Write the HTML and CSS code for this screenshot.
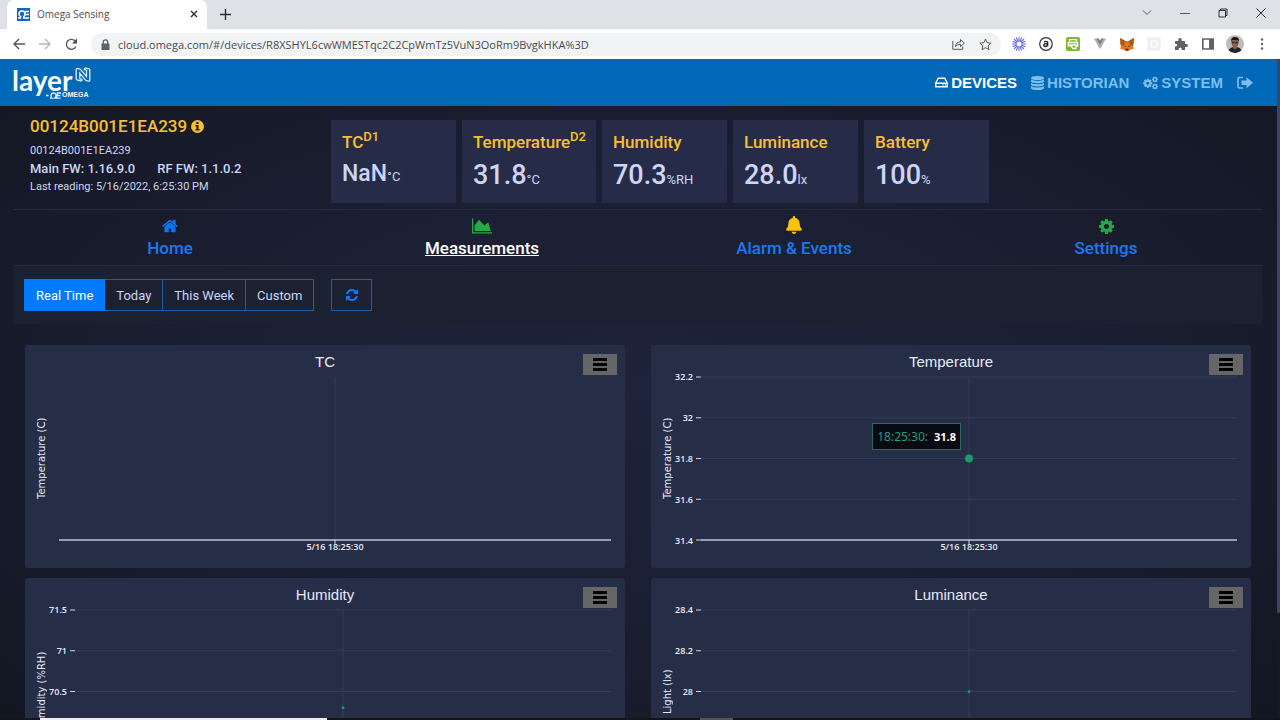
FILE: index.html
```html
<!DOCTYPE html>
<html lang="en">
<head>
<meta charset="utf-8">
<title>Omega Sensing</title>
<link rel="stylesheet" href="styles.css">
</head>
<body>
<svg class="sprite" aria-hidden="true">
  <symbol id="cog" viewBox="128 128 1536 1536"><path fill-rule="evenodd" d="M1152 896q0-106-75-181t-181-75-181 75-75 181 75 181 181 75 181-75 75-181zm512-109v222q0 12-8 23t-20 13l-185 28q-19 54-39 91 35 50 107 138 10 12 10 25t-9 23q-27 37-99 108t-94 71q-12 0-26-9l-138-108q-44 23-91 38-16 136-29 186-7 28-36 28h-222q-14 0-24.500-8.500t-11.500-21.500l-28-184q-49-16-90-37l-141 107q-10 9-25 9-14 0-25-11-126-114-165-168-7-10-7-23 0-12 8-23 15-21 51-66.500t54-70.500q-27-50-41-99l-183-27q-13-2-21-12.500t-8-23.500v-222q0-12 8-23t19-13l186-28q14-46 39-92-40-57-107-138-10-12-10-24 0-10 9-23 26-36 98.500-107.500t94.500-71.500q13 0 26 10l138 107q44-23 91-38 16-136 29-186 7-28 36-28h222q14 0 24.500 8.500t11.500 21.500l28 184q49 16 90 37l142-107q9-9 24-9 13 0 25 10 129 119 165 170 7 8 7 22 0 12-8 23-15 21-51 66.500t-54 70.500q26 50 41 98l183 28q13 2 21 12.500t8 23.500z"/></symbol>
  <symbol id="bars" viewBox="0 0 14 13"><path d="M0 0h14v3H0zM0 5h14v3H0zM0 10h14v3H0z"/></symbol>
</svg>

<div class="tabstrip">
  <div class="tab">
    <svg class="favicon" viewBox="0 0 13 13"><path fill="#1565c0" d="M0 0h13v13H0z"/><path fill="none" stroke="#fff" stroke-width="1.500" d="M1 10h2.500V8.500Q2 7.500 2 6q0-3 3-3t3 3q0 1.500-1.200 2.500V10H12M8 3.500h4M8.500 6.500H12"/></svg>
    <span class="tab-title">Omega Sensing</span>
    <button class="chrome-btn tab-close" aria-label="Close tab"><svg width="8" height="8" viewBox="0 0 8 8"><path class="line dark" d="M1 1l6 6M7 1L1 7"/></svg></button>
  </div>
  <button class="chrome-btn new-tab" aria-label="New tab"><svg width="11" height="11" viewBox="0 0 11 11"><path class="line dark" d="M5.500 0v11M0 5.500h11"/></svg></button>
  <div class="window-controls">
    <button class="chrome-btn" aria-label="Search tabs"><svg width="10" height="6" viewBox="0 0 10 6"><path class="line thin" d="M1 .5l4 4 4-4"/></svg></button>
    <button class="chrome-btn" aria-label="Minimize"><svg width="10" height="10" viewBox="0 0 10 10"><path class="line thin" d="M0 5.500h10"/></svg></button>
    <button class="chrome-btn" aria-label="Restore"><svg width="10" height="10" viewBox="0 0 10 10"><path class="line thin dark" d="M1 2.500h6.500V9H1zM2.500 2.500V1H9v6.500H7.500"/></svg></button>
    <button class="chrome-btn" aria-label="Close"><svg width="10" height="10" viewBox="0 0 10 10"><path class="line thin dark" d="M.5.5l9 9M9.500.5l-9 9"/></svg></button>
  </div>
</div>

<div class="toolbar">
  <div class="history">
    <button class="chrome-btn" aria-label="Back"><svg width="12" height="12" viewBox="0 0 12 12"><path class="line" d="M12 6H1.500M6 1L1 6l5 5"/></svg></button>
    <button class="chrome-btn" aria-label="Forward"><svg width="12" height="12" viewBox="0 0 12 12"><path class="line faint" d="M0 6h10.500M6 1l5 5-5 5"/></svg></button>
    <button class="chrome-btn" aria-label="Reload"><svg width="13" height="13" viewBox="0 0 13 13"><path class="line" d="M10.900 8.500A5 5 0 1 1 10.500 3.500L11.500 5"/><path d="M12 .5V5.500H7z" fill="#4a4d51"/></svg></button>
  </div>
  <div class="omnibox">
    <svg class="lock" viewBox="0 0 9 11"><path d="M.5 4.500h8V11h-8z" fill="#5f6368"/><path d="M2.300 5V3a2.200 2.200 0 0 1 4.400 0v2" fill="none" stroke="#5f6368" stroke-width="1.300"/></svg>
    <input class="url" type="text" aria-label="Address" value="cloud.omega.com/#/devices/R8XSHYL6cwWMESTqc2C2CpWmTz5VuN3OoRm9BvgkHKA%3D">
    <button class="chrome-btn" aria-label="Share"><svg width="13" height="12" viewBox="0 0 13 12"><path class="line thin" d="M.8 3v8.300h10V8.500M3.500 8.500q.3-4.500 5-4.500V1.500l3.800 3.600-3.800 3.600V6.300q-3.500 0-5 2.200z"/></svg></button>
    <button class="chrome-btn" aria-label="Bookmark"><svg width="13" height="13" viewBox="0 0 13 13"><path class="line thin" d="M6.500 1l1.600 3.700 4 .4-3 2.700.9 3.900-3.500-2-3.500 2 .9-3.900-3-2.700 4-.4z"/></svg></button>
  </div>
  <div class="extensions">
    <svg viewBox="0 0 16 16"><g stroke="#6a67e4" stroke-width="1.100"><path d="M8 1v14M1 8h14M3 3l10 10M13 3L3 13M5.300 1.500l5.400 13M10.700 1.500l-5.400 13M1.500 5.300l13 5.400M14.500 5.300l-13 5.400"/></g><circle cx="8" cy="8" r="2.500" fill="#fff"/></svg>
    <svg viewBox="0 0 16 16"><circle cx="8" cy="8" r="6.300" fill="#fff" stroke="#333" stroke-width="1.200"/><path d="M6 6q2-1.300 3.600 0v4.500M9.500 7.700q-3.700-.2-3.700 1.500 0 1.500 1.700 1.300 1.500-.2 2-1.500" fill="none" stroke="#222" stroke-width="1.400"/></svg>
    <svg viewBox="0 0 16 16"><rect x="1" y="1" width="14" height="14" rx="2" fill="#7cb928"/><path d="M4.500 5.500V3.700h7v1.800M4.500 10H3.300V6.500h9.400V10h-1.200M5 9h6v3.500H8L5 9z" fill="none" stroke="#fff" stroke-width="1.300"/></svg>
    <svg viewBox="0 0 16 16"><path d="M2 2.500h3.500L8 7.200l2.500-4.700H14L8 13.300z" fill="#aaa"/><path d="M4.800 2.500h2L8 4.800l1.200-2.300h2L8 8.500z" fill="#777"/></svg>
    <svg viewBox="0 0 16 16"><path d="M1.200 2l5 3h3.600l5-3 .2 5-1 3 .7 3-3.200.5L9.700 15H6.300l-1.800-1.500-3.200-.5.700-3-1-3z" fill="#e2761b"/><path d="M1.200 2l5 3-1 4L2 10zM14.800 2l-5 3 1 4 3.200 1z" fill="#a9571d"/><path d="M5 9.500l2 .8-.4 1zM11 9.500l-2 .8.400 1zM6.500 12.800h3l-.5 1.700H7z" fill="#233447"/></svg>
    <svg viewBox="0 0 16 16"><rect x="1.500" y="1.500" width="13" height="13" rx="1" fill="#eee"/><circle cx="8" cy="8" r="3.500" fill="none" stroke="#fafafa" stroke-width="2"/></svg>
    <svg viewBox="0 0 16 16"><path d="M2 5h3.500Q4.800 2 7 2t1.500 3H12v3q3-.6 3 1.400T12 11v3H8.800q.2-2.500-1.600-2.500T5.500 14H2v-3.500q2.300 0 2.300-1.500T2 7.700z" fill="#5f6368"/></svg>
    <svg viewBox="0 0 16 16"><path d="M2.800 3h10.400v10H2.800z" fill="none" stroke="#5f6368" stroke-width="1.600"/><path d="M9 3h4.500v10H9z" fill="#5f6368"/></svg>
    <svg class="avatar" viewBox="0 0 18 18"><circle cx="9" cy="9" r="9" fill="#b9bcbb"/><path d="M2.500 15.200Q4 12.500 7 12h4q3 .5 4.500 3.200A9 9 0 0 1 2.500 15.200z" fill="#20242a"/><path d="M7 10h4v3l-2 1.500L7 13z" fill="#8b5d4b"/><ellipse cx="9" cy="7.500" rx="3.500" ry="4.500" fill="#8a5e4d"/><path d="M5 7q-.5-5 4-5t4 5l-1-2H6z" fill="#17181b"/><path d="M5.800 6.700h2.700v1.600H5.800zM9.500 6.700h2.700v1.600H9.500z" fill="#2c2523"/></svg>
    <svg viewBox="0 0 16 16"><g fill="#5f6368"><circle cx="8" cy="3.500" r="1.200"/><circle cx="8" cy="8" r="1.200"/><circle cx="8" cy="12.500" r="1.200"/></g></svg>
  </div>
</div>

<div class="viewport">
<div class="page">
  <header class="app-header">
    <a class="brand" href="#" aria-label="layer N by Omega">
      <span class="brand-name">layer</span>
      <svg class="brand-n" viewBox="0 0 16 16"><path d="M1.200 2.700q0-1.500 1.600-1.200l2.500.7 6.200 7.300V3.200L9.500 2.700q-.5-1.700 1-1.500l3 .4q1.300.2 1.300 1.500v9.800q0 1.700-1.600 1.200l-2.500-.8-5.900-7v5.500l2 .6q.6 1.700-1 1.500l-3.300-.8q-1.300-.3-1.300-1.500z"/></svg>
      <span class="brand-sub"><svg viewBox="0 0 15 7"><path d="M0 3.500h2.500M4 6.200h2Q4.800 5 5 3.500 5.300 1 7.500 1T10 3q0 2-1.500 3.200h2L11.500 1H15M11 3.500h3.500M10.500 6.200h4"/></svg>OMEGA</span>
    </a>
    <nav class="main-nav">
      <a class="active" href="#"><svg width="13" height="11" viewBox="0 0 13 11"><path d="M3.300 1.200h6.400L12.200 6v3.800H.8V6zM.8 6.200h11.400M7.500 8h1M9.800 8h1" fill="none" stroke="currentColor" stroke-width="1.400"/></svg>DEVICES</a>
      <a href="#"><svg width="13" height="14" viewBox="0 0 13 14"><path fill="currentColor" d="M0 2q0-2 6.500-2T13 2t-6.500 2T0 2zM0 3.600q2 1.300 6.500 1.300T13 3.600v1.700q0 1.900-6.500 1.900T0 5.300zM0 6.900q2 1.300 6.500 1.300T13 6.900v1.700q0 1.900-6.500 1.900T0 8.600zM0 10.200q2 1.300 6.500 1.300T13 10.200V12q0 2-6.500 2T0 12z"/></svg>HISTORIAN</a>
      <a href="#"><svg width="15" height="14" viewBox="0 0 15 14" fill="currentColor"><use href="#cog" x="0" y="2.500" width="9.500" height="9.500"/><use href="#cog" x="9" y="0.500" width="6" height="6"/><use href="#cog" x="9" y="7.500" width="6" height="6"/></svg>SYSTEM</a>
      <a class="logout" href="#" aria-label="Sign out"><svg width="16" height="14" viewBox="0 0 16 14"><path d="M6 1.500H2.500Q1 1.500 1 3v7.500Q1 12 2.500 12H6" fill="none" stroke="currentColor" stroke-width="1.700"/><path fill="currentColor" d="M4.500 4.500h5V1.300L16 6.800l-6.500 5.500V9h-5z"/></svg></a>
    </nav>
  </header>

  <main>
    <section class="device">
      <div class="device-info">
        <h1>00124B001E1EA239 <svg width="13" height="13" viewBox="0 0 13 13"><circle cx="6.500" cy="6.500" r="6.500" fill="currentColor"/><path fill="#171b29" d="M5.300 2h2.200v2H5.300zM4.500 5h3v4h1v1.600h-4V9h1V6.500h-1z"/></svg></h1>
        <p class="small">00124B001E1EA239</p>
        <p class="firmware"><span>Main FW: 1.16.9.0</span><span>RF FW: 1.1.0.2</span></p>
        <p class="small">Last reading: 5/16/2022, 6:25:30 PM</p>
      </div>
      <div class="readings">
        <article class="reading"><h2>TC<sup>D1</sup></h2><p class="value empty">NaN<span>°C</span></p></article>
        <article class="reading"><h2>Temperature<sup>D2</sup></h2><p class="value">31.8<span>°C</span></p></article>
        <article class="reading"><h2>Humidity</h2><p class="value">70.3<span>%RH</span></p></article>
        <article class="reading"><h2>Luminance</h2><p class="value">28.0<span>lx</span></p></article>
        <article class="reading"><h2>Battery</h2><p class="value">100<span>%</span></p></article>
      </div>
    </section>

    <nav class="sections">
      <a href="#"><svg width="16" height="16" viewBox="64 128 1664 1536" fill="#0b76f5"><path d="M1472 992v480q0 26-19 45t-45 19h-384v-384h-256v384h-384q-26 0-45-19t-19-45v-480q0-1 .5-3t.5-3l575-474 575 474q1 2 1 6zm223-69l-62 74q-8 9-21 11h-3q-13 0-21-7l-692-577-692 577q-12 8-24 7-13-2-21-11l-62-74q-8-10-7-23.500t11-21.500l719-599q32-26 76-26t76 26l244 204v-195q0-14 9-23t23-9h192q14 0 23 9t9 23v408l219 182q10 8 11 21.500t-7 23.500z"/></svg>Home</a>
      <a class="active" href="#"><svg width="20" height="16" viewBox="0 128 2048 1536" fill="#28a745"><path d="M2048 1536v128H0V128h128v1408zm-384-1024l256 896H256V832l448-576 576 576z"/></svg>Measurements</a>
      <a href="#"><svg width="16" height="18" viewBox="0 0 448 512" fill="#ffc107"><path d="M224 512c35.320 0 63.970-28.650 63.970-64H160.030c0 35.350 28.650 64 63.970 64zm215.390-149.710c-19.320-20.760-55.470-51.990-55.470-154.290 0-77.700-54.480-139.900-127.940-155.160V32c0-17.670-14.320-32-31.980-32s-31.980 14.330-31.980 32v20.840C118.560 68.100 64.080 130.300 64.080 208c0 102.300-36.150 133.530-55.470 154.290-6 6.450-8.660 14.160-8.610 21.710.11 16.400 12.980 32 32.100 32h383.800c19.120 0 32-15.600 32.100-32 .05-7.550-2.610-15.270-8.610-21.710z"/></svg>Alarm &amp; Events</a>
      <a href="#"><svg width="15" height="15" fill="#28a745"><use href="#cog"/></svg>Settings</a>
    </nav>

    <div class="range-bar">
      <div class="range-group" role="group" aria-label="Time range">
        <button class="active" type="button">Real Time</button><button type="button">Today</button><button type="button">This Week</button><button type="button">Custom</button>
      </div>
      <button class="refresh" type="button" aria-label="Refresh"><svg width="12" height="12" viewBox="0 128 1536 1536"><path fill="currentColor" d="M1511 1056q0 5-1 7-64 268-268 434.500t-478 166.500q-146 0-282.500-55t-243.500-157l-129 129q-19 19-45 19t-45-19-19-45v-448q0-26 19-45t45-19h448q26 0 45 19t19 45-19 45l-137 137q71 66 161 102t187 36q134 0 250-65t186-179q11-17 53-117 8-23 30-23h192q13 0 22.500 9.500t9.500 22.500zm25-800v448q0 26-19 45t-45 19h-448q-26 0-45-19t-19-45 19-45l138-138q-148-137-349-137-134 0-250 65t-186 179q-11 17-53 117-8 23-30 23H33q-13 0-22.500-9.500T1 736v-7q65-268 270-434.500t480-166.500q146 0 284 55.500t245 156.500l130-129q19-19 45-19t45 19 19 45z"/></svg></button>
    </div>

    <section class="charts">
      <article class="chart">
        <h3>TC</h3>
        <button class="chart-menu" type="button" aria-label="TC chart menu"><svg width="14" height="13"><use href="#bars"/></svg></button>
        <div class="chart-body">
          <div class="axis-title">Temperature (C)</div>
          <div class="plot">
            <svg class="lines"><line class="grid" x1="50%" x2="50%" y1="0" y2="100%"/><line class="axis" x1="0" x2="100%" y1="100%" y2="100%"/><line class="tick" x1="50%" x2="50%" y1="163" y2="168"/></svg>
            <div class="x-label">5/16 18:25:30</div>
          </div>
        </div>
      </article>

      <article class="chart">
        <h3>Temperature</h3>
        <button class="chart-menu" type="button" aria-label="Temperature chart menu"><svg width="14" height="13"><use href="#bars"/></svg></button>
        <div class="chart-body">
          <div class="axis-title">Temperature (C)</div>
          <div class="ticks"><span>32.2</span><span>32</span><span>31.8</span><span>31.6</span><span>31.4</span></div>
          <div class="plot">
            <svg class="lines">
              <line class="grid" x1="0" x2="100%" y1="0" y2="0"/><line class="grid" x1="0" x2="100%" y1="25%" y2="25%"/><line class="grid" x1="0" x2="100%" y1="50%" y2="50%"/><line class="grid" x1="0" x2="100%" y1="75%" y2="75%"/><line class="grid" x1="50%" x2="50%" y1="0" y2="100%"/>
              <line class="tick" x1="-5" x2="0" y1="0" y2="0"/><line class="tick" x1="-5" x2="0" y1="25%" y2="25%"/><line class="tick" x1="-5" x2="0" y1="50%" y2="50%"/><line class="tick" x1="-5" x2="0" y1="75%" y2="75%"/><line class="tick" x1="-5" x2="0" y1="100%" y2="100%"/>
              <line class="axis" x1="0" x2="100%" y1="100%" y2="100%"/>
              <line class="tick" x1="50%" x2="50%" y1="163" y2="168"/>
              <circle class="point" cx="50%" cy="50%" r="4"/>
            </svg>
            <div class="tooltip"><span>18:25:30:</span><b>31.8</b></div>
            <div class="x-label">5/16 18:25:30</div>
          </div>
        </div>
      </article>

      <article class="chart">
        <h3>Humidity</h3>
        <button class="chart-menu" type="button" aria-label="Humidity chart menu"><svg width="14" height="13"><use href="#bars"/></svg></button>
        <div class="chart-body">
          <div class="axis-title">Humidity (%RH)</div>
          <div class="ticks"><span>71.5</span><span>71</span><span>70.5</span></div>
          <div class="plot">
            <svg class="lines">
              <line class="grid" x1="0" x2="100%" y1="0" y2="0"/><line class="grid" x1="0" x2="100%" y1="25%" y2="25%"/><line class="grid" x1="0" x2="100%" y1="50%" y2="50%"/><line class="grid" x1="0" x2="100%" y1="75%" y2="75%"/><line class="grid" x1="50%" x2="50%" y1="0" y2="100%"/>
              <line class="tick" x1="-5" x2="0" y1="0" y2="0"/><line class="tick" x1="-5" x2="0" y1="25%" y2="25%"/><line class="tick" x1="-5" x2="0" y1="50%" y2="50%"/>
              <circle class="point" cx="50%" cy="60%" r="1.500"/>
            </svg>
          </div>
        </div>
      </article>

      <article class="chart">
        <h3>Luminance</h3>
        <button class="chart-menu" type="button" aria-label="Luminance chart menu"><svg width="14" height="13"><use href="#bars"/></svg></button>
        <div class="chart-body">
          <div class="axis-title">Light (lx)</div>
          <div class="ticks"><span>28.4</span><span>28.2</span><span>28</span></div>
          <div class="plot">
            <svg class="lines">
              <line class="grid" x1="0" x2="100%" y1="0" y2="0"/><line class="grid" x1="0" x2="100%" y1="25%" y2="25%"/><line class="grid" x1="0" x2="100%" y1="50%" y2="50%"/><line class="grid" x1="0" x2="100%" y1="75%" y2="75%"/><line class="grid" x1="50%" x2="50%" y1="0" y2="100%"/>
              <line class="tick" x1="-5" x2="0" y1="0" y2="0"/><line class="tick" x1="-5" x2="0" y1="25%" y2="25%"/><line class="tick" x1="-5" x2="0" y1="50%" y2="50%"/>
              <circle class="point" cx="50%" cy="50%" r="1.500"/>
            </svg>
          </div>
        </div>
      </article>
    </section>
  </main>
</div>
<div class="scrollbar"><div class="thumb"></div></div>
</div>
<div class="taskbar"><span class="search"></span><span class="running"></span></div>
</body>
</html>
```

FILE: styles.css
```css
* { box-sizing: border-box; }
body {
  margin: 0;
  height: 100vh;
  display: flex;
  flex-direction: column;
  overflow: hidden;
  background: #141824;
  font-family: Roboto, sans-serif;
}
h1, h2, h3, p { margin: 0; font-weight: 500; }
a { text-decoration: none; }
button { font-family: inherit; cursor: pointer; }
svg { display: block; flex: none; }
.sprite { position: absolute; width: 0; height: 0; }

/* Browser window */
.chrome-btn {
  display: flex;
  align-items: center;
  justify-content: center;
  padding: 0;
  border: 0;
  background: none;
}
.line { fill: none; stroke: #55585c; stroke-width: 1.4; }
.line.thin { stroke-width: 1; }
.line.dark { stroke: #2b2d30; }
.line.faint { stroke: #b4b6b9; }
.tabstrip {
  display: flex;
  flex: none;
  height: 29px;
  padding-left: 7px;
  background: #dee1e6;
}
.tab {
  display: flex;
  align-items: center;
  width: 200px;
  padding: 0 9px 1px 10px;
  border-radius: 7px 7px 0 0;
  background: #fff;
}
.favicon { width: 13px; height: 13px; }
.tab-title {
  flex: 1;
  margin-left: 7px;
  font: 10px "Open Sans", sans-serif;
  color: #4a4d51;
}
.new-tab { width: 36px; }
.window-controls { display: flex; margin-left: auto; }
.window-controls .chrome-btn { width: 38px; height: 26px; }
.toolbar {
  display: flex;
  flex: none;
  align-items: center;
  height: 30px;
  padding: 0 10px 0 13px;
  background: #fff;
}
.history { display: flex; gap: 14px; width: 78px; }
.omnibox {
  display: flex;
  flex: 1;
  align-items: center;
  gap: 14px;
  height: 23px;
  padding: 0 9px 0 10px;
  border-radius: 12px;
  background: #f1f3f4;
}
.lock { width: 9px; height: 11px; margin-right: -6px; }
.url {
  flex: 1;
  min-width: 0;
  padding: 0;
  border: 0;
  outline: 0;
  background: none;
  font: 11px "Open Sans", sans-serif;
  color: #4a4d51;
}
.extensions { display: flex; align-items: center; gap: 11px; margin-left: 10px; }
.extensions svg { width: 16px; height: 16px; }
.extensions .avatar { width: 18px; height: 18px; margin: 0 -1px; }

/* Application */
.viewport { display: flex; flex: 1; min-height: 0; }
.page {
  flex: 1;
  min-width: 0;
  overflow: hidden;
  background: radial-gradient(ellipse at 50% 50%, #1f233b 0%, #1b1f33 45%, #161a28 80%, #131722 100%);
}
.scrollbar { width: 3px; background: #151928; }
.thumb { height: 84%; border-radius: 0 0 2px 2px; background: #3e4466; }
.taskbar { display: flex; flex: none; height: 2px; padding-left: 40px; background: #171419; }
.search { width: 287px; background: #f2edf0; }
.running { width: 33px; margin-left: 373px; background: #55525a; }

.app-header {
  display: flex;
  align-items: center;
  justify-content: space-between;
  height: 47px;
  padding: 0 24px 0 12px;
  background: #0068b7;
}
.brand {
  display: grid;
  grid-template-columns: auto 16px;
  column-gap: 3px;
  color: #f2faff;
}
.brand-name { font: 700 28px/28px Lato, sans-serif; }
.brand-n { width: 16px; height: 16px; margin-top: 1px; }
.brand-n path, .brand-sub path { fill: none; stroke: #e0f0fa; stroke-width: 1.3; }
.brand-sub {
  display: flex;
  grid-column: 1 / 3;
  justify-content: flex-end;
  align-items: center;
  gap: 1px;
  padding-right: 3px;
  margin-top: -3px;
  font: 700 7px/8px "Liberation Sans", sans-serif;
}
.brand-sub svg { width: 15px; height: 7px; }
.main-nav { display: flex; align-items: center; gap: 14px; }
.main-nav a {
  display: flex;
  align-items: center;
  gap: 3px;
  font: 700 15px/20px "Liberation Sans", sans-serif;
  color: #7fbdea;
}
.main-nav a.active { color: #fff; }

.device {
  display: flex;
  margin: 0 15px 0 14px;
  padding: 14px 0 6px 16px;
  border-bottom: 1px solid #272c3c;
}
.device-info { width: 301px; color: #cdd6f6; }
.device-info h1 {
  display: flex;
  align-items: center;
  gap: 4px;
  height: 13px;
  margin-bottom: 9px;
  font-size: 17px;
  line-height: 13px;
  color: #fbc02d;
}
.small { font-size: 11px; line-height: 18px; font-weight: 400; }
.firmware { display: flex; gap: 22px; font-size: 13px; line-height: 18px; }
.readings { display: flex; gap: 6px; }
.reading {
  min-width: 125px;
  height: 83px;
  padding: 11px 10px 0 11px;
  background: #262c47;
}
.reading h2 { font-size: 17px; line-height: 22px; color: #fbc02d; }
.reading sup { font-size: 13px; line-height: 0; }
.value {
  margin-top: 6px;
  font-size: 27px;
  line-height: 32px;
  color: #cdd6fa;
}
.value.empty { font-size: 23px; line-height: 30px; }
.value span { font-size: 13px; font-weight: 400; }

.sections {
  display: grid;
  grid-template-columns: repeat(4, 1fr);
  height: 56px;
  margin: 0 15px 0 14px;
  border-bottom: 1px solid #272c3c;
}
.sections a {
  display: flex;
  flex-direction: column;
  align-items: center;
  justify-content: flex-end;
  gap: 4px;
  padding-bottom: 7px;
  font-size: 17px;
  line-height: 20px;
  font-weight: 500;
  color: #1a79f2;
}
.sections a.active { color: #fff; text-decoration: underline; }

.range-bar {
  display: flex;
  gap: 17px;
  margin: 0 15px 21px 14px;
  padding: 13px 10px;
  background: #1b2130;
}
.range-group { display: flex; }
.range-bar button {
  height: 32px;
  padding: 0 11px;
  border: 1px solid #205ca8;
  background: none;
  font-size: 13px;
  color: #cdd6f6;
}
.range-group button + button { border-left: 0; }
.range-bar button.active { border-color: #007bff; background: #007bff; color: #fff; }
.range-bar .refresh {
  display: flex;
  align-items: center;
  justify-content: center;
  width: 41px;
  color: #0b7bff;
}

.charts {
  display: grid;
  grid-template-columns: 1fr 1fr;
  gap: 10px 26px;
  padding: 0 26px 0 25px;
}
.chart {
  position: relative;
  height: 223px;
  border-radius: 3px;
  background: #262d47;
  color: #e8ebf6;
}
.chart h3 {
  height: 32px;
  padding-top: 1px;
  font: 400 15px/32px "Liberation Sans", sans-serif;
  text-align: center;
}
.chart-menu {
  position: absolute;
  top: 9px;
  right: 8px;
  display: flex;
  align-items: center;
  justify-content: center;
  width: 34px;
  height: 21px;
  padding: 0;
  border: 0;
  background: #666;
}
.chart-body { display: flex; height: 163px; padding: 0 14px 0 10px; }
.axis-title {
  width: 14px;
  writing-mode: vertical-rl;
  transform: rotate(180deg);
  font: 10px/14px "DejaVu Sans", sans-serif;
  text-align: center;
}
.ticks {
  display: grid;
  grid-auto-rows: 1fr;
  grid-template-rows: repeat(4, 41px);
  justify-items: end;
  width: 18px;
  margin: -6px 8px 0 0;
  font: 600 9px/12px "Open Sans", sans-serif;
}
.plot { position: relative; flex: 1; }
.axis-title + .plot { margin-left: 10px; }
.lines { width: 100%; height: 163px; overflow: visible; }
.grid { stroke: #353c55; }
.tick { stroke: #d5d8e4; }
.axis { stroke: #9a9eb2; stroke-width: 2; }
.point { fill: #1b9a6c; }
.x-label {
  font: 600 9px/14px "Open Sans", sans-serif;
  text-align: center;
}
.tooltip {
  position: absolute;
  top: 46px;
  right: calc(50% + 8px);
  display: flex;
  align-items: center;
  gap: 6px;
  height: 27px;
  padding: 0 4px;
  border: 1px solid #2a6b58;
  background: #080b12;
  font: 12px "Noto Sans", sans-serif;
  color: #2a9c72;
}
.tooltip b { font-size: 11px; color: #fff; }
```
